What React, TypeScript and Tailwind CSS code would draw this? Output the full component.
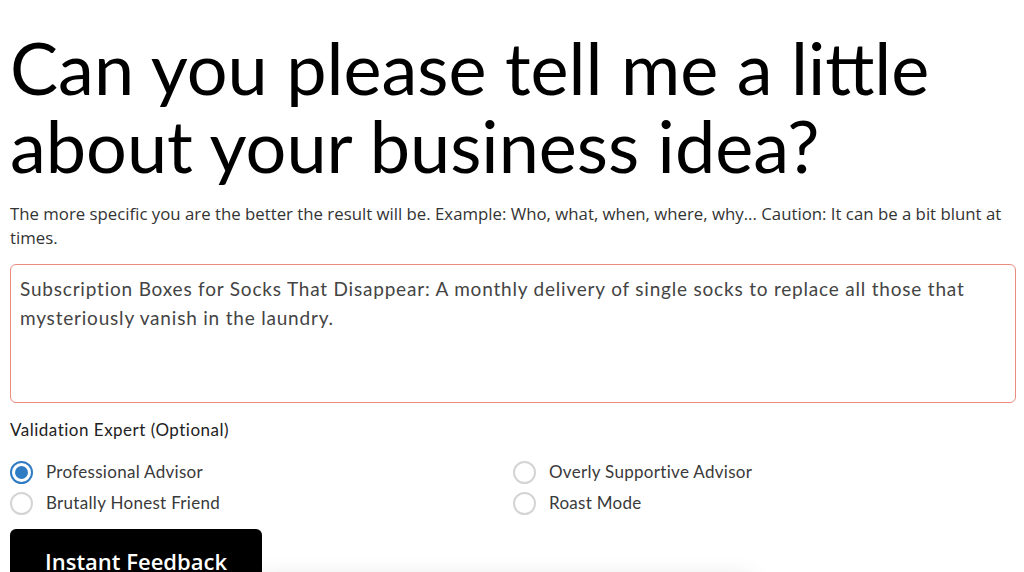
const options = [
  { label: "Professional Advisor", checked: true },
  { label: "Overly Supportive Advisor", checked: false },
  { label: "Brutally Honest Friend", checked: false },
  { label: "Roast Mode", checked: false },
];

function Radio({ label, checked }: { label: string; checked: boolean }) {
  return (
    <label className="flex items-center gap-[13px] h-[31px]">
      <span
        className={`w-[23px] h-[23px] rounded-full border-2 flex items-center justify-center ${checked ? "border-[#2f7bc4]" : "border-[#d4d4d4]"}`}
      >
        {checked && <span className="w-[13px] h-[13px] rounded-full bg-[#2f7bc4]" />}
      </span>
      <span className="text-[17px] tracking-[0.3px] text-[#3a3a3a] font-['Lato',sans-serif]">{label}</span>
    </label>
  );
}

export default function App() {
  return (
    <div className="w-[1024px] h-[572px] overflow-hidden bg-white pl-[10px] pr-[8px]">
      <h1 className="pt-[28px] text-[72px] leading-[78px] text-black font-['Lato',sans-serif]">
        Can you please tell me a little about your business idea?
      </h1>
      <p className="mt-[18px] text-[16.8px] leading-[24px] text-[#333] font-['Open_Sans',sans-serif]">
        The more specific you are the better the result will be. Example: Who, what, when, where, why... Caution: It can be a bit blunt at times.
      </p>
      <div className="mt-[14px] h-[139px] border border-[#ec8a80] rounded-[6px] px-[9px] pt-[9px] text-[19px] tracking-[0.8px] leading-[29px] text-[#444] font-['Lato',sans-serif]">
        Subscription Boxes for Socks That Disappear: A monthly delivery of single socks to replace all those that mysteriously vanish in the laundry.
      </div>
      <div className="mt-[14px] text-[17px] tracking-[0.5px] text-[#222] font-['Lato',sans-serif]">
        Validation Expert (Optional)
      </div>
      <div className="mt-[14px] grid grid-cols-2">
        {options.map((o) => (
          <Radio key={o.label} label={o.label} checked={o.checked} />
        ))}
      </div>
      <div className="relative mt-[10px]">
        <div className="absolute left-[250px] top-[52px] w-[490px] h-[30px] bg-white shadow-[0_0_24px_rgba(0,0,0,0.18)]" />
        <button className="relative w-[252px] h-[60px] bg-black rounded-[6px] text-white text-[22px] font-semibold pt-[6px] font-['Open_Sans',sans-serif]">
          Instant Feedback
        </button>
      </div>
    </div>
  );
}
